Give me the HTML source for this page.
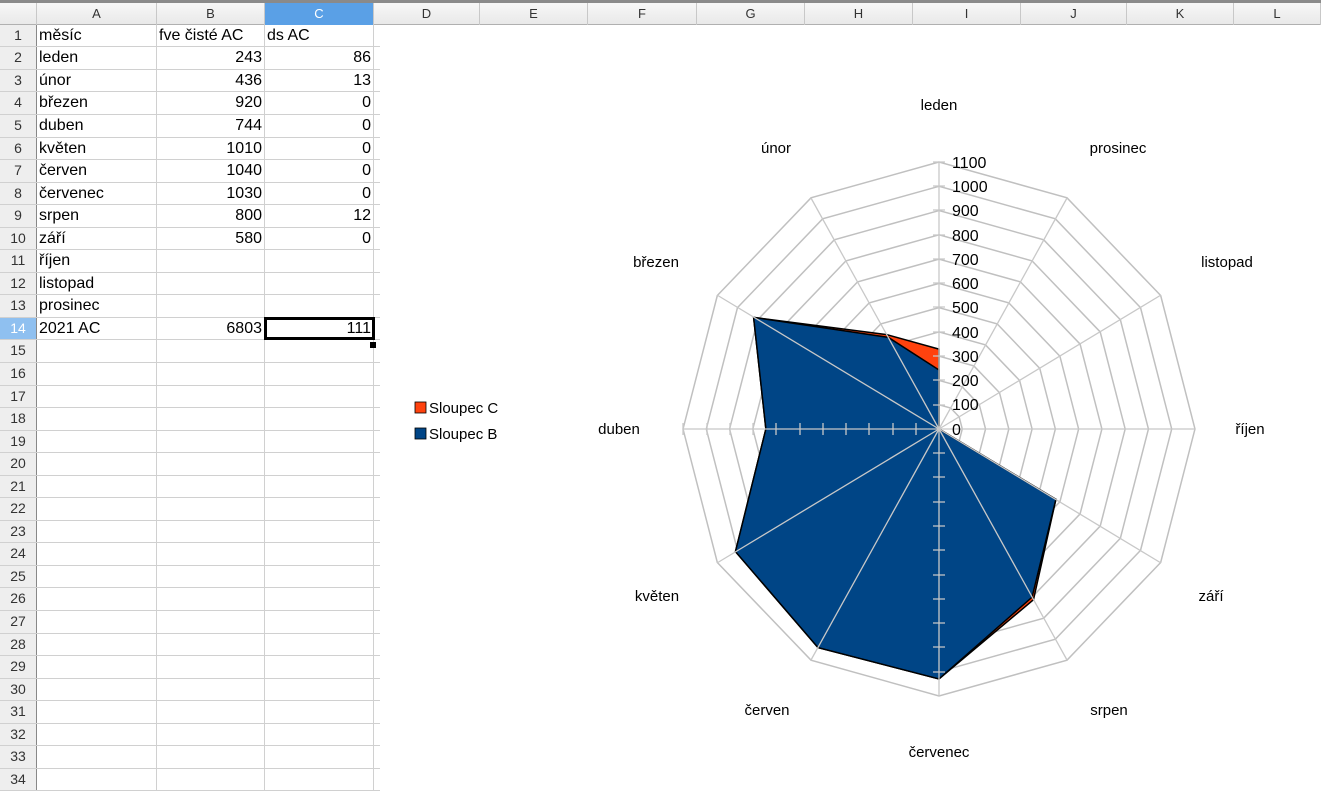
<!DOCTYPE html>
<html><head><meta charset="utf-8"><style>
body{margin:0;width:1321px;height:783px;overflow:hidden;background:#fff;font-family:"Liberation Sans",sans-serif;position:relative}
.hdr{position:absolute;top:0;left:0;width:1321px;height:25px;background:linear-gradient(#f7f7f7,#e9e9e9);border-top:3px solid #8a8a8a;box-sizing:border-box;border-bottom:1px solid #b0b0b0}
.hc{position:absolute;top:0;height:22px;line-height:22px;text-align:center;font-size:13px;color:#333;border-right:1px solid #c8c8c8;box-sizing:border-box}
.rows{position:absolute;top:24.8px;left:0}
.r{height:22.55px;display:flex;box-sizing:border-box;border-bottom:1px solid #d0d0d0;width:380px}
.r div{box-sizing:border-box;border-right:1px solid #d0d0d0;font-size:16px;line-height:21px;padding:0 2px;white-space:nowrap;color:#000}
.n{width:37px;background:#eeeeee;text-align:center;font-size:14px!important;color:#333!important;border-right:1px solid #888!important}
.a{width:120px}.b{width:108px;text-align:right}.c{width:109px;text-align:right}
</style></head><body>
<div class="hdr">
<div class="hc" style="left:0;width:37px"></div>
<div class="hc" style="left:37px;width:120px">A</div>
<div class="hc" style="left:157px;width:108px">B</div>
<div class="hc" style="left:265px;width:109px;background:#5aa0e6;color:#fff">C</div>
<div class="hc" style="left:374px;width:106px">D</div>
<div class="hc" style="left:480px;width:108px">E</div>
<div class="hc" style="left:588px;width:109px">F</div>
<div class="hc" style="left:697px;width:108px">G</div>
<div class="hc" style="left:805px;width:108px">H</div>
<div class="hc" style="left:913px;width:108px">I</div>
<div class="hc" style="left:1021px;width:106px">J</div>
<div class="hc" style="left:1127px;width:107px">K</div>
<div class="hc" style="left:1234px;width:87px">L</div>
</div>
<div class="rows">
<div class="r"><div class="n">1</div><div class="a">měsíc</div><div class="a" style="width:108px">fve čisté AC</div><div class="a" style="width:109px">ds AC</div></div>
<div class="r"><div class="n">2</div><div class="a">leden</div><div class="b">243</div><div class="c">86</div></div>
<div class="r"><div class="n">3</div><div class="a">únor</div><div class="b">436</div><div class="c">13</div></div>
<div class="r"><div class="n">4</div><div class="a">březen</div><div class="b">920</div><div class="c">0</div></div>
<div class="r"><div class="n">5</div><div class="a">duben</div><div class="b">744</div><div class="c">0</div></div>
<div class="r"><div class="n">6</div><div class="a">květen</div><div class="b">1010</div><div class="c">0</div></div>
<div class="r"><div class="n">7</div><div class="a">červen</div><div class="b">1040</div><div class="c">0</div></div>
<div class="r"><div class="n">8</div><div class="a">červenec</div><div class="b">1030</div><div class="c">0</div></div>
<div class="r"><div class="n">9</div><div class="a">srpen</div><div class="b">800</div><div class="c">12</div></div>
<div class="r"><div class="n">10</div><div class="a">září</div><div class="b">580</div><div class="c">0</div></div>
<div class="r"><div class="n">11</div><div class="a">říjen</div><div class="b"></div><div class="c"></div></div>
<div class="r"><div class="n">12</div><div class="a">listopad</div><div class="b"></div><div class="c"></div></div>
<div class="r"><div class="n">13</div><div class="a">prosinec</div><div class="b"></div><div class="c"></div></div>
<div class="r"><div class="n" style="background:#8fc0f0;color:#fff!important">14</div><div class="a">2021 AC</div><div class="b">6803</div><div class="c" style="outline:3px solid #000;outline-offset:-2px">111</div></div>
<div class="r"><div class="n">15</div><div class="a"></div><div class="b"></div><div class="c"></div></div>
<div class="r"><div class="n">16</div><div class="a"></div><div class="b"></div><div class="c"></div></div>
<div class="r"><div class="n">17</div><div class="a"></div><div class="b"></div><div class="c"></div></div>
<div class="r"><div class="n">18</div><div class="a"></div><div class="b"></div><div class="c"></div></div>
<div class="r"><div class="n">19</div><div class="a"></div><div class="b"></div><div class="c"></div></div>
<div class="r"><div class="n">20</div><div class="a"></div><div class="b"></div><div class="c"></div></div>
<div class="r"><div class="n">21</div><div class="a"></div><div class="b"></div><div class="c"></div></div>
<div class="r"><div class="n">22</div><div class="a"></div><div class="b"></div><div class="c"></div></div>
<div class="r"><div class="n">23</div><div class="a"></div><div class="b"></div><div class="c"></div></div>
<div class="r"><div class="n">24</div><div class="a"></div><div class="b"></div><div class="c"></div></div>
<div class="r"><div class="n">25</div><div class="a"></div><div class="b"></div><div class="c"></div></div>
<div class="r"><div class="n">26</div><div class="a"></div><div class="b"></div><div class="c"></div></div>
<div class="r"><div class="n">27</div><div class="a"></div><div class="b"></div><div class="c"></div></div>
<div class="r"><div class="n">28</div><div class="a"></div><div class="b"></div><div class="c"></div></div>
<div class="r"><div class="n">29</div><div class="a"></div><div class="b"></div><div class="c"></div></div>
<div class="r"><div class="n">30</div><div class="a"></div><div class="b"></div><div class="c"></div></div>
<div class="r"><div class="n">31</div><div class="a"></div><div class="b"></div><div class="c"></div></div>
<div class="r"><div class="n">32</div><div class="a"></div><div class="b"></div><div class="c"></div></div>
<div class="r"><div class="n">33</div><div class="a"></div><div class="b"></div><div class="c"></div></div>
<div class="r"><div class="n">34</div><div class="a"></div><div class="b"></div><div class="c"></div></div>
</div>
<div style="position:absolute;left:370px;top:342px;width:6px;height:6px;background:#000"></div>
<svg style="position:absolute;left:0;top:0" width="1321" height="783">
<g transform="translate(939,429) scale(0.2327,0.2427)" fill="none" stroke="#c0c0c0" stroke-width="1.5">
<polygon transform="scale(100)" vector-effect="non-scaling-stroke" fill="none" points="0,-1 -0.5,-0.866 -0.866,-0.5 -1,0 -0.866,0.5 -0.5,0.866 0,1 0.5,0.866 0.866,0.5 1,0 0.866,-0.5 0.5,-0.866"/>
<polygon transform="scale(200)" vector-effect="non-scaling-stroke" fill="none" points="0,-1 -0.5,-0.866 -0.866,-0.5 -1,0 -0.866,0.5 -0.5,0.866 0,1 0.5,0.866 0.866,0.5 1,0 0.866,-0.5 0.5,-0.866"/>
<polygon transform="scale(300)" vector-effect="non-scaling-stroke" fill="none" points="0,-1 -0.5,-0.866 -0.866,-0.5 -1,0 -0.866,0.5 -0.5,0.866 0,1 0.5,0.866 0.866,0.5 1,0 0.866,-0.5 0.5,-0.866"/>
<polygon transform="scale(400)" vector-effect="non-scaling-stroke" fill="none" points="0,-1 -0.5,-0.866 -0.866,-0.5 -1,0 -0.866,0.5 -0.5,0.866 0,1 0.5,0.866 0.866,0.5 1,0 0.866,-0.5 0.5,-0.866"/>
<polygon transform="scale(500)" vector-effect="non-scaling-stroke" fill="none" points="0,-1 -0.5,-0.866 -0.866,-0.5 -1,0 -0.866,0.5 -0.5,0.866 0,1 0.5,0.866 0.866,0.5 1,0 0.866,-0.5 0.5,-0.866"/>
<polygon transform="scale(600)" vector-effect="non-scaling-stroke" fill="none" points="0,-1 -0.5,-0.866 -0.866,-0.5 -1,0 -0.866,0.5 -0.5,0.866 0,1 0.5,0.866 0.866,0.5 1,0 0.866,-0.5 0.5,-0.866"/>
<polygon transform="scale(700)" vector-effect="non-scaling-stroke" fill="none" points="0,-1 -0.5,-0.866 -0.866,-0.5 -1,0 -0.866,0.5 -0.5,0.866 0,1 0.5,0.866 0.866,0.5 1,0 0.866,-0.5 0.5,-0.866"/>
<polygon transform="scale(800)" vector-effect="non-scaling-stroke" fill="none" points="0,-1 -0.5,-0.866 -0.866,-0.5 -1,0 -0.866,0.5 -0.5,0.866 0,1 0.5,0.866 0.866,0.5 1,0 0.866,-0.5 0.5,-0.866"/>
<polygon transform="scale(900)" vector-effect="non-scaling-stroke" fill="none" points="0,-1 -0.5,-0.866 -0.866,-0.5 -1,0 -0.866,0.5 -0.5,0.866 0,1 0.5,0.866 0.866,0.5 1,0 0.866,-0.5 0.5,-0.866"/>
<polygon transform="scale(1000)" vector-effect="non-scaling-stroke" fill="none" points="0,-1 -0.5,-0.866 -0.866,-0.5 -1,0 -0.866,0.5 -0.5,0.866 0,1 0.5,0.866 0.866,0.5 1,0 0.866,-0.5 0.5,-0.866"/>
<polygon transform="scale(1100)" vector-effect="non-scaling-stroke" fill="none" points="0,-1 -0.5,-0.866 -0.866,-0.5 -1,0 -0.866,0.5 -0.5,0.866 0,1 0.5,0.866 0.866,0.5 1,0 0.866,-0.5 0.5,-0.866"/>
</g>
<g transform="translate(939,429) scale(0.2327,0.2427)">
<polygon points="0,-329 -224.5,-388.8 -796.7,-460 -744,0 -874.7,505 -520,900.7 0,1030 406,703.2 502.3,290 0,0" fill="#ff420e" stroke="#000" stroke-width="1.5" vector-effect="non-scaling-stroke"/>
<polygon points="0,-243 -218,-377.6 -796.7,-460 -744,0 -874.7,505 -520,900.7 0,1030 400,692.8 502.3,290 0,0" fill="#004586" stroke="#000" stroke-width="1.5" vector-effect="non-scaling-stroke"/>
</g>
<g stroke="#c8c8c8" stroke-width="1.3">
<line x1="939" y1="429" x2="939" y2="162"/><line x1="939" y1="429" x2="811" y2="198"/><line x1="939" y1="429" x2="717" y2="295"/>
<line x1="939" y1="429" x2="683" y2="429"/><line x1="939" y1="429" x2="717" y2="563"/><line x1="939" y1="429" x2="811" y2="660"/>
<line x1="939" y1="429" x2="939" y2="696"/><line x1="939" y1="429" x2="1067" y2="660"/><line x1="939" y1="429" x2="1161" y2="563"/>
<line x1="939" y1="429" x2="1195" y2="429"/><line x1="939" y1="429" x2="1161" y2="295"/><line x1="939" y1="429" x2="1067" y2="198"/>
</g>
<g stroke="#c8c8c8" stroke-width="1.3">
<path d="M933 405h12M933 380h12M933 356h12M933 332h12M933 307h12M933 283h12M933 259h12M933 235h12M933 210h12M933 186h12M933 162h12"/>
<path d="M916 423v12M893 423v12M869 423v12M846 423v12M823 423v12M800 423v12M776 423v12M753 423v12M730 423v12M707 423v12M683 423v12"/>
<path d="M933 453h12M933 477h12M933 502h12M933 526h12M933 550h12M933 575h12M933 599h12M933 623h12M933 647h12M933 672h12"/>
</g>
<g font-size="16" fill="#000" font-family="Liberation Sans,sans-serif">
<text x="952" y="435">0</text><text x="952" y="410">100</text><text x="952" y="386">200</text><text x="952" y="362">300</text><text x="952" y="338">400</text><text x="952" y="313">500</text><text x="952" y="289">600</text><text x="952" y="265">700</text><text x="952" y="241">800</text><text x="952" y="216">900</text><text x="952" y="192">1000</text><text x="952" y="168">1100</text>
</g>
<g font-size="15" fill="#000" font-family="Liberation Sans,sans-serif" text-anchor="middle">
<text x="939" y="110">leden</text><text x="776" y="153">únor</text><text x="1118" y="153">prosinec</text>
<text x="656" y="267">březen</text><text x="1227" y="267">listopad</text><text x="619" y="434">duben</text>
<text x="1250" y="434">říjen</text><text x="657" y="601">květen</text><text x="1211" y="601">září</text>
<text x="767" y="715">červen</text><text x="1109" y="715">srpen</text><text x="939" y="757">červenec</text>
</g>
<rect x="415" y="402" width="11" height="11" fill="#ff420e" stroke="#000" stroke-width="0.8"/>
<rect x="415" y="428" width="11" height="11" fill="#004586" stroke="#000" stroke-width="0.8"/>
<g font-size="15" font-family="Liberation Sans,sans-serif"><text x="429" y="413">Sloupec C</text><text x="429" y="439">Sloupec B</text></g>
</svg>
</body></html>
